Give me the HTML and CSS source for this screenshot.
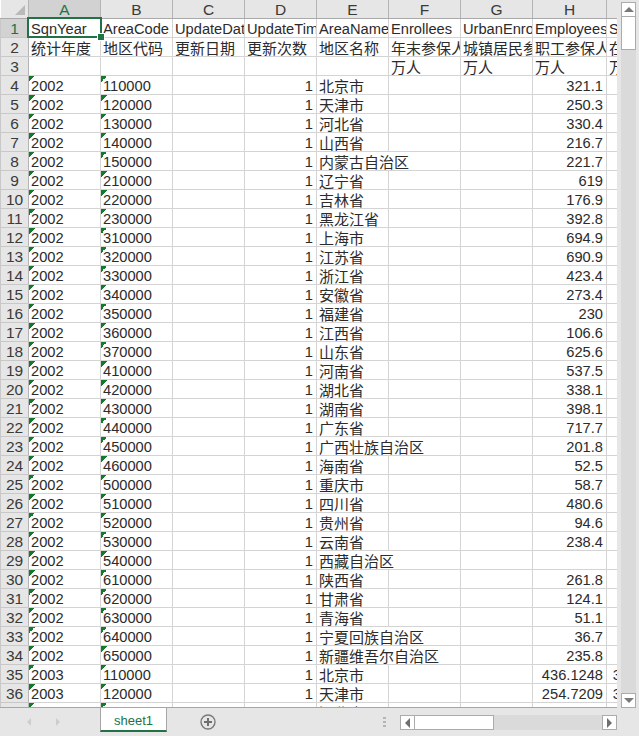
FILE: index.html
```html
<!DOCTYPE html>
<html lang="zh">
<head>
<meta charset="utf-8">
<title>sheet1</title>
<link rel="stylesheet" href="styles.css">
</head>
<body>
<div class="app">
  <div class="main">
    <div class="grid-wrap">
      <table class="grid">
        <colgroup>
          <col class="c-head"><col class="c"><col class="c"><col class="c"><col class="c"><col class="c"><col class="c"><col class="c"><col class="c-last">
        </colgroup>
        <thead>
          <tr><th class="corner"><span class="corner-mark"></span></th><th class="sel">A</th><th>B</th><th>C</th><th>D</th><th>E</th><th>F</th><th>G</th><th>H</th><th></th></tr>
        </thead>
        <tbody>
          <tr><th class="sel">1</th><td>SqnYear</td><td>AreaCode</td><td>UpdateDate</td><td>UpdateTimes</td><td>AreaName</td><td>Enrollees</td><td>UrbanEnrollees</td><td>EmployeesEnrollees</td><td>StaffEnrollees</td></tr>
          <tr><th>2</th><td>统计年度</td><td>地区代码</td><td>更新日期</td><td>更新次数</td><td>地区名称</td><td>年末参保人数</td><td>城镇居民参保人数</td><td>职工参保人数</td><td>在职职工</td></tr>
          <tr><th>3</th><td></td><td></td><td></td><td></td><td></td><td>万人</td><td>万人</td><td>万人</td><td>万人</td></tr>
          <tr><th>4</th><td class="t">2002</td><td class="t">110000</td><td></td><td class="n">1</td><td>北京市</td><td></td><td></td><td class="n">321.1</td><td></td></tr>
          <tr><th>5</th><td class="t">2002</td><td class="t">120000</td><td></td><td class="n">1</td><td>天津市</td><td></td><td></td><td class="n">250.3</td><td></td></tr>
          <tr><th>6</th><td class="t">2002</td><td class="t">130000</td><td></td><td class="n">1</td><td>河北省</td><td></td><td></td><td class="n">330.4</td><td></td></tr>
          <tr><th>7</th><td class="t">2002</td><td class="t">140000</td><td></td><td class="n">1</td><td>山西省</td><td></td><td></td><td class="n">216.7</td><td></td></tr>
          <tr><th>8</th><td class="t">2002</td><td class="t">150000</td><td></td><td class="n">1</td><td colspan="2">内蒙古自治区</td><td></td><td class="n">221.7</td><td></td></tr>
          <tr><th>9</th><td class="t">2002</td><td class="t">210000</td><td></td><td class="n">1</td><td>辽宁省</td><td></td><td></td><td class="n">619</td><td></td></tr>
          <tr><th>10</th><td class="t">2002</td><td class="t">220000</td><td></td><td class="n">1</td><td>吉林省</td><td></td><td></td><td class="n">176.9</td><td></td></tr>
          <tr><th>11</th><td class="t">2002</td><td class="t">230000</td><td></td><td class="n">1</td><td>黑龙江省</td><td></td><td></td><td class="n">392.8</td><td></td></tr>
          <tr><th>12</th><td class="t">2002</td><td class="t">310000</td><td></td><td class="n">1</td><td>上海市</td><td></td><td></td><td class="n">694.9</td><td></td></tr>
          <tr><th>13</th><td class="t">2002</td><td class="t">320000</td><td></td><td class="n">1</td><td>江苏省</td><td></td><td></td><td class="n">690.9</td><td></td></tr>
          <tr><th>14</th><td class="t">2002</td><td class="t">330000</td><td></td><td class="n">1</td><td>浙江省</td><td></td><td></td><td class="n">423.4</td><td></td></tr>
          <tr><th>15</th><td class="t">2002</td><td class="t">340000</td><td></td><td class="n">1</td><td>安徽省</td><td></td><td></td><td class="n">273.4</td><td></td></tr>
          <tr><th>16</th><td class="t">2002</td><td class="t">350000</td><td></td><td class="n">1</td><td>福建省</td><td></td><td></td><td class="n">230</td><td></td></tr>
          <tr><th>17</th><td class="t">2002</td><td class="t">360000</td><td></td><td class="n">1</td><td>江西省</td><td></td><td></td><td class="n">106.6</td><td></td></tr>
          <tr><th>18</th><td class="t">2002</td><td class="t">370000</td><td></td><td class="n">1</td><td>山东省</td><td></td><td></td><td class="n">625.6</td><td></td></tr>
          <tr><th>19</th><td class="t">2002</td><td class="t">410000</td><td></td><td class="n">1</td><td>河南省</td><td></td><td></td><td class="n">537.5</td><td></td></tr>
          <tr><th>20</th><td class="t">2002</td><td class="t">420000</td><td></td><td class="n">1</td><td>湖北省</td><td></td><td></td><td class="n">338.1</td><td></td></tr>
          <tr><th>21</th><td class="t">2002</td><td class="t">430000</td><td></td><td class="n">1</td><td>湖南省</td><td></td><td></td><td class="n">398.1</td><td></td></tr>
          <tr><th>22</th><td class="t">2002</td><td class="t">440000</td><td></td><td class="n">1</td><td>广东省</td><td></td><td></td><td class="n">717.7</td><td></td></tr>
          <tr><th>23</th><td class="t">2002</td><td class="t">450000</td><td></td><td class="n">1</td><td colspan="2">广西壮族自治区</td><td></td><td class="n">201.8</td><td></td></tr>
          <tr><th>24</th><td class="t">2002</td><td class="t">460000</td><td></td><td class="n">1</td><td>海南省</td><td></td><td></td><td class="n">52.5</td><td></td></tr>
          <tr><th>25</th><td class="t">2002</td><td class="t">500000</td><td></td><td class="n">1</td><td>重庆市</td><td></td><td></td><td class="n">58.7</td><td></td></tr>
          <tr><th>26</th><td class="t">2002</td><td class="t">510000</td><td></td><td class="n">1</td><td>四川省</td><td></td><td></td><td class="n">480.6</td><td></td></tr>
          <tr><th>27</th><td class="t">2002</td><td class="t">520000</td><td></td><td class="n">1</td><td>贵州省</td><td></td><td></td><td class="n">94.6</td><td></td></tr>
          <tr><th>28</th><td class="t">2002</td><td class="t">530000</td><td></td><td class="n">1</td><td>云南省</td><td></td><td></td><td class="n">238.4</td><td></td></tr>
          <tr><th>29</th><td class="t">2002</td><td class="t">540000</td><td></td><td class="n">1</td><td colspan="2">西藏自治区</td><td></td><td></td><td></td></tr>
          <tr><th>30</th><td class="t">2002</td><td class="t">610000</td><td></td><td class="n">1</td><td>陕西省</td><td></td><td></td><td class="n">261.8</td><td></td></tr>
          <tr><th>31</th><td class="t">2002</td><td class="t">620000</td><td></td><td class="n">1</td><td>甘肃省</td><td></td><td></td><td class="n">124.1</td><td></td></tr>
          <tr><th>32</th><td class="t">2002</td><td class="t">630000</td><td></td><td class="n">1</td><td>青海省</td><td></td><td></td><td class="n">51.1</td><td></td></tr>
          <tr><th>33</th><td class="t">2002</td><td class="t">640000</td><td></td><td class="n">1</td><td colspan="2">宁夏回族自治区</td><td></td><td class="n">36.7</td><td></td></tr>
          <tr><th>34</th><td class="t">2002</td><td class="t">650000</td><td></td><td class="n">1</td><td colspan="2">新疆维吾尔自治区</td><td></td><td class="n">235.8</td><td></td></tr>
          <tr><th>35</th><td class="t">2003</td><td class="t">110000</td><td></td><td class="n">1</td><td>北京市</td><td></td><td></td><td class="n">436.1248</td><td class="n">356.4321</td></tr>
          <tr><th>36</th><td class="t">2003</td><td class="t">120000</td><td></td><td class="n">1</td><td>天津市</td><td></td><td></td><td class="n">254.7209</td><td class="n">356.4321</td></tr>
          <tr><th>37</th><td class="t">2003</td><td class="t">130000</td><td></td><td class="n">1</td><td>河北省</td><td></td><td></td><td class="n">340.2211</td><td class="n">256.4321</td></tr>
        </tbody>
      </table>
      <div class="selection"><span class="handle"></span></div>
    </div>
    <div class="vscroll">
      <div class="sbtn vbtn"><span class="arr up"></span></div>
      <div class="vthumb"></div>
      <div class="vtrack"></div>
      <div class="sbtn vbtn"><span class="arr down"></span></div>
    </div>
  </div>
  <div class="bottom">
    <div class="nav">
      <span class="arr nav-left"></span>
      <span class="arr nav-right"></span>
    </div>
    <div class="tab">sheet1</div>
    <svg class="add" width="16" height="16" viewBox="0 0 16 16" aria-hidden="true">
      <circle cx="8" cy="8" r="7" fill="none" stroke="#7a7a7a" stroke-width="1.4"/>
      <path d="M8 4v8M4 8h8" stroke="#6e6e6e" stroke-width="2" fill="none"/>
    </svg>
    <div class="dots"><i></i><i></i><i></i></div>
    <div class="hscroll">
      <div class="sbtn hbtn"><span class="arr left"></span></div>
      <div class="hthumb"></div>
      <div class="htrack"></div>
      <div class="sbtn hbtn"><span class="arr right"></span></div>
    </div>
  </div>
</div>
</body>
</html>
```
FILE: styles.css
```css
* { box-sizing: border-box; }
html, body { margin: 0; padding: 0; }
body {
  width: 639px;
  height: 736px;
  overflow: hidden;
  background: #e6e6e6;
  font-family: "Liberation Sans", "Noto Sans CJK SC", sans-serif;
}
.app { display: flex; flex-direction: column; width: 639px; height: 736px; }
.main { display: flex; height: 708px; }
.grid-wrap {
  position: relative;
  width: 617px;
  height: 708px;
  overflow: hidden;
  background: #fff;
  border-bottom: 1px solid #a6a6a6;
}
.grid {
  table-layout: fixed;
  border-collapse: collapse;
  width: 678px;
  font-size: 14.67px;
  color: #2b2b2b;
}
.c-head { width: 28px; }
.c { width: 72px; }
.c-last { width: 74px; }
.grid th {
  height: 19px;
  padding: 1px 0 0;
  font-weight: 400;
  font-size: 15.5px;
  line-height: 17px;
  text-align: center;
  background: #e6e6e6;
  color: #3a3a3a;
  border: 1px solid #c8c8c8;
  border-right-color: #b4b4b4;
}
.grid thead th {
  height: 18px;
  border-top: 0;
  border-bottom-color: #a9a9a9;
  border-right-color: #b4b4b4;
}
.grid th.sel { background: #d2d2d2; color: #217346; }
.grid .corner { position: relative; border-left: 0; }
.corner-mark {
  position: absolute;
  right: 3px;
  bottom: 3px;
  width: 0;
  height: 0;
  border-style: solid;
  border-width: 0 0 10px 10px;
  border-color: transparent transparent #b9b9b9 transparent;
}
.grid td {
  height: 19px;
  padding: 0 3px 0 2px;
  line-height: 15px;
  vertical-align: bottom;
  white-space: nowrap;
  overflow: hidden;
  border: 1px solid #d4d4d4;
  background: #fff;
}
/* The Chinese cells run a touch wider than the Latin ones */
.grid tbody tr:nth-child(n+4) td:nth-child(6),
.grid tbody tr:nth-child(2) td,
.grid tbody tr:nth-child(3) td { font-size: 15px; }
.grid td.n { text-align: right; }
.grid td.t {
  background-image: linear-gradient(135deg, #137a2c 50%, transparent 50%);
  background-size: 6px 6px;
  background-repeat: no-repeat;
}
.selection {
  position: absolute;
  left: 27px;
  top: 17px;
  width: 75px;
  height: 21px;
  border: 2px solid #217346;
}
.handle {
  position: absolute;
  right: -4px;
  bottom: -4px;
  width: 6px;
  height: 6px;
  background: #217346;
  outline: 1px solid #fff;
}

.vscroll {
  display: flex;
  flex-direction: column;
  width: 22px;
  height: 708px;
  padding: 2px 3px 0 4px;
}
.sbtn {
  display: flex;
  align-items: center;
  justify-content: center;
  flex: none;
  background: #fff;
  border: 1px solid #ababab;
}
.vbtn { width: 15px; height: 15px; }
.vthumb {
  width: 15px;
  height: 34px;
  margin-top: -1px;
  background: #fff;
  border: 1px solid #ababab;
}
.vtrack { flex: 1; width: 15px; background: #dadada; }
.arr { display: block; width: 0; height: 0; border-style: solid; }
.up { border-width: 0 5px 5px 5px; border-color: transparent transparent #7a7a7a transparent; }
.down { border-width: 5px 5px 0 5px; border-color: #7a7a7a transparent transparent transparent; }
.left { border-width: 5px 5px 5px 0; border-color: transparent #6e6e6e transparent transparent; }
.right { border-width: 5px 0 5px 5px; border-color: transparent transparent transparent #6e6e6e; }

.bottom { display: flex; align-items: flex-start; height: 28px; }
.nav {
  display: flex;
  align-items: center;
  gap: 25px;
  width: 100px;
  height: 28px;
  padding: 0 0 1px 27px;
}
.nav-left { border-width: 4px 4px 4px 0; border-color: transparent #cdcdcd transparent transparent; }
.nav-right { border-width: 4px 0 4px 4px; border-color: transparent transparent transparent #cdcdcd; }
.tab {
  width: 67px;
  height: 25px;
  margin-top: -1px;
  padding-top: 5px;
  text-align: center;
  font-size: 13px;
  line-height: 18px;
  color: #217346;
  background: #fff;
  border: 1px solid #a6a6a6;
  border-top: 0;
  border-bottom: 2px solid #217346;
}
.add { flex: none; margin: 6px 0 0 33px; }
.dots {
  display: flex;
  flex-direction: column;
  gap: 2px;
  width: 3px;
  margin: 9px 0 0 167px;
}
.dots i { display: block; width: 3px; height: 2px; background: #b5b5b5; }
.hscroll {
  display: flex;
  width: 217px;
  height: 15px;
  margin: 7px 0 0 14px;
}
.hbtn { width: 15px; height: 15px; }
.hthumb {
  width: 80px;
  height: 15px;
  margin-left: -1px;
  background: #fff;
  border: 1px solid #ababab;
}
.htrack { flex: 1; background: #dadada; }
```
